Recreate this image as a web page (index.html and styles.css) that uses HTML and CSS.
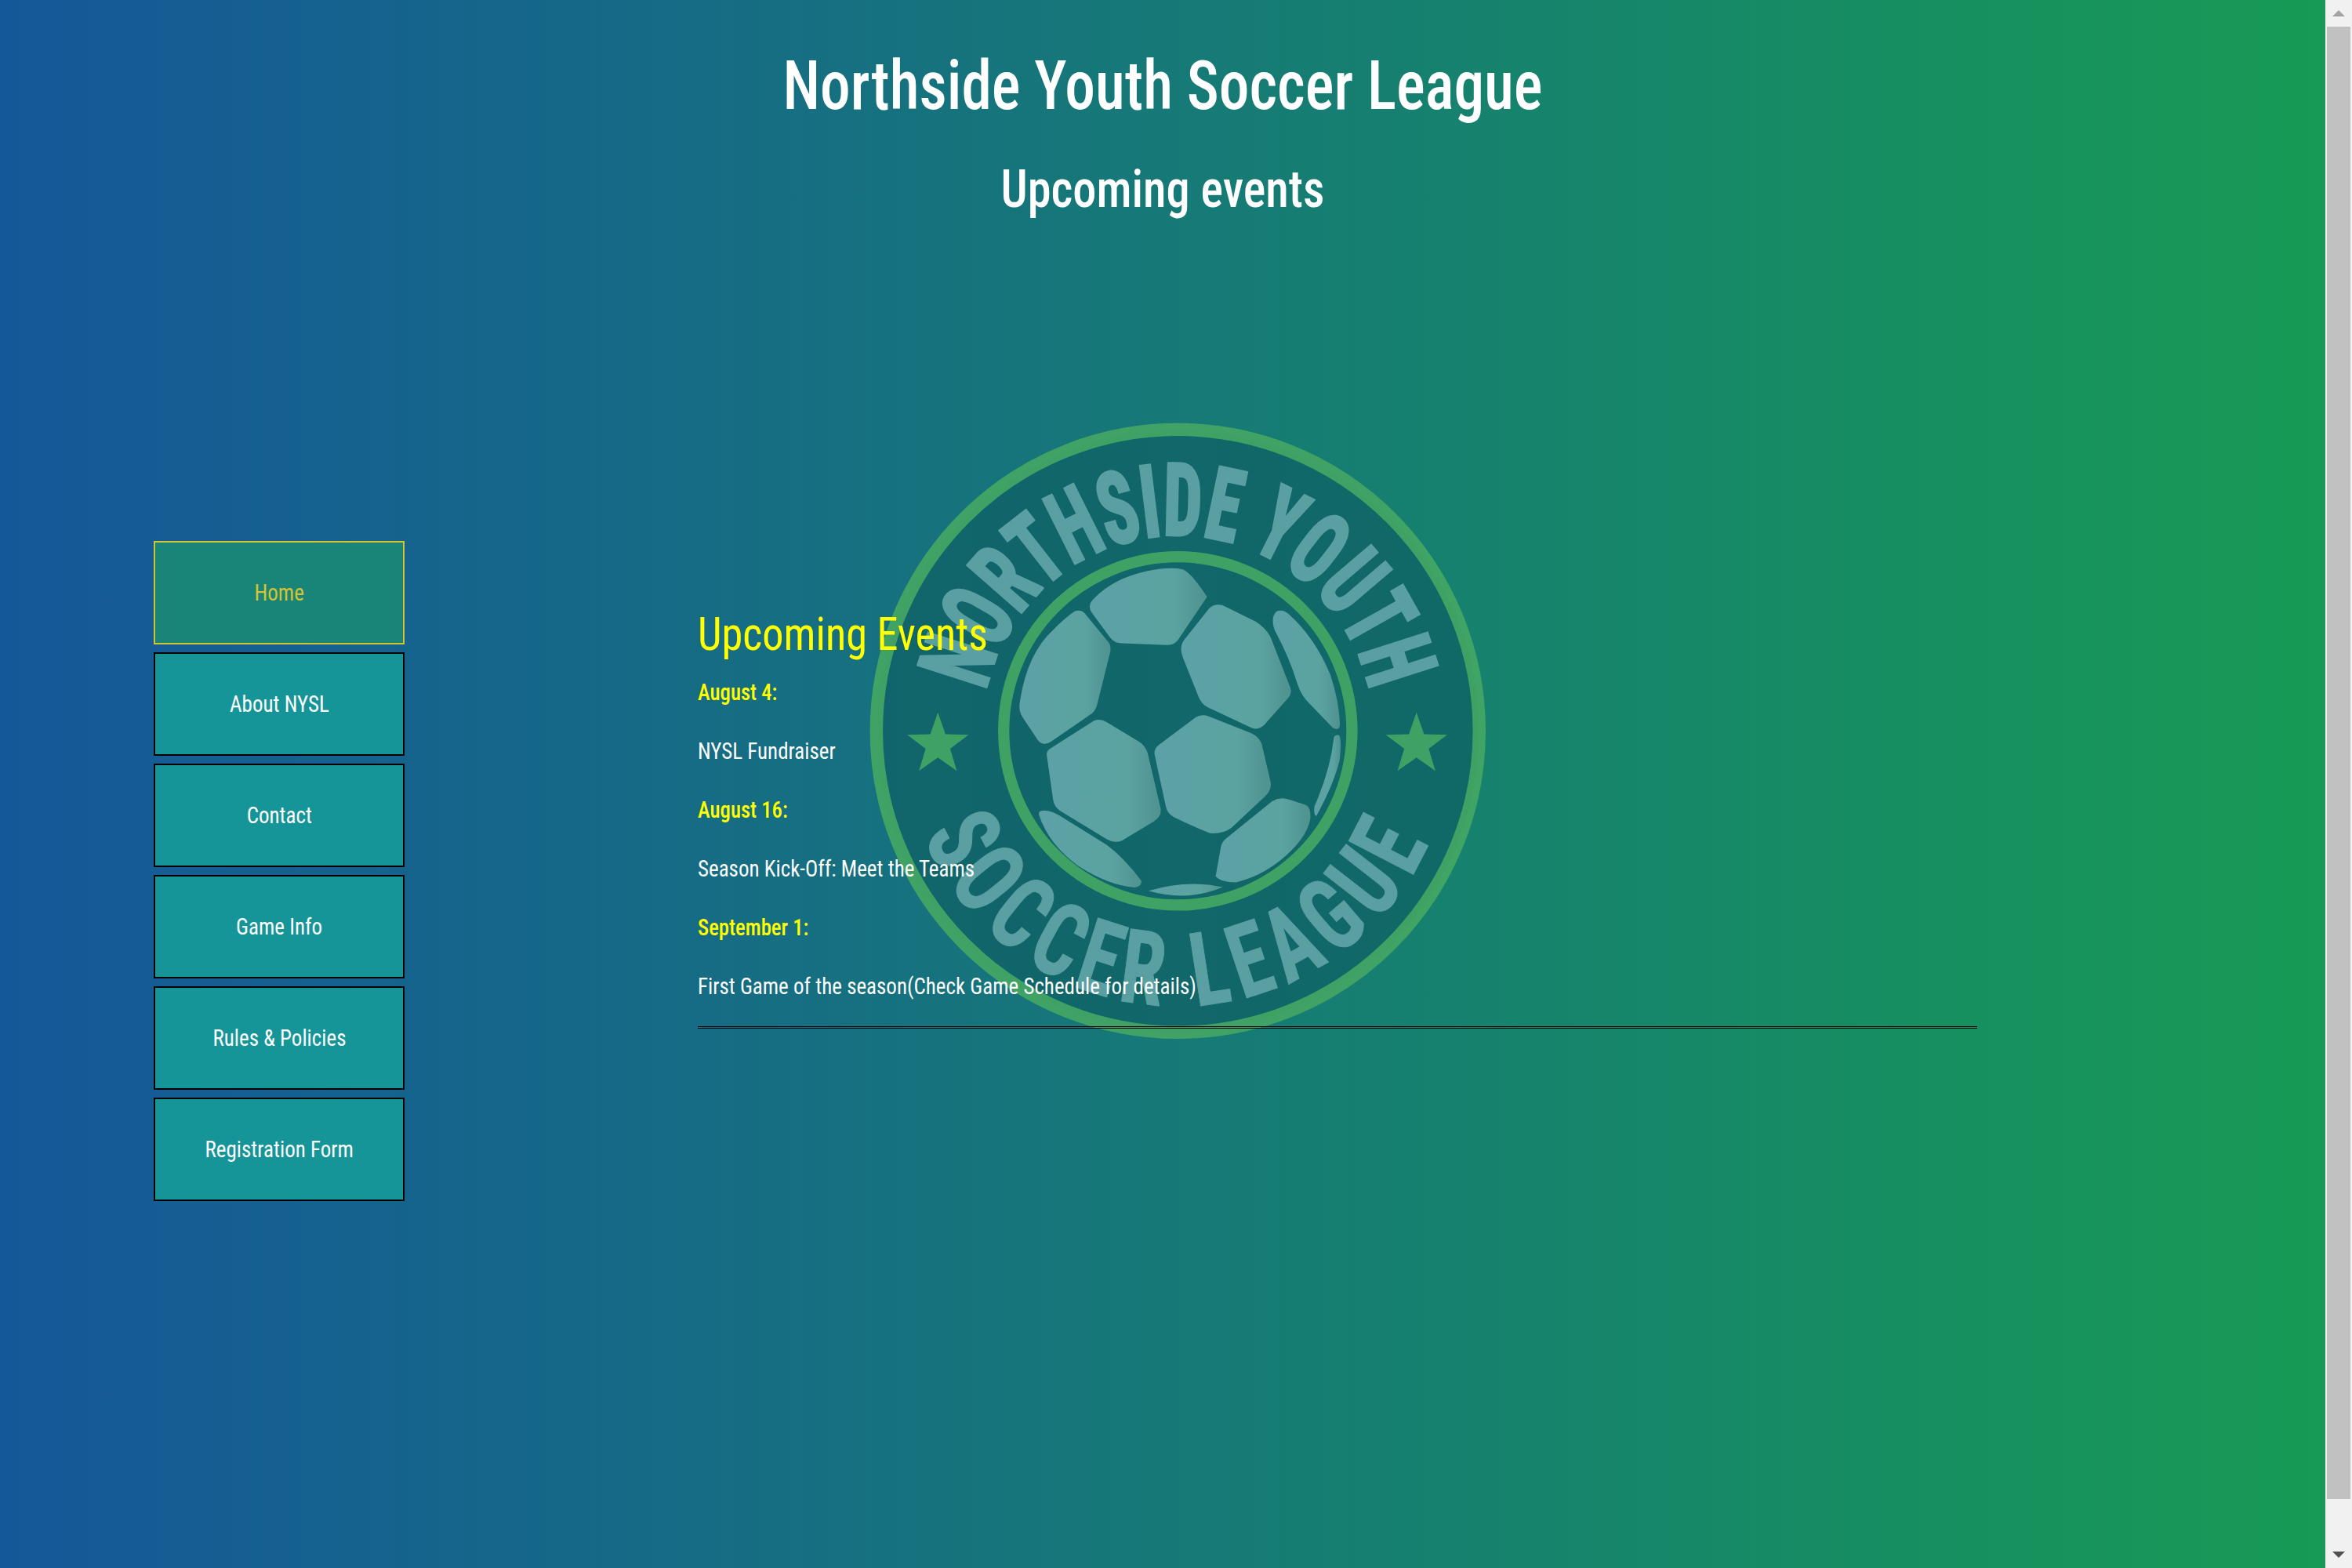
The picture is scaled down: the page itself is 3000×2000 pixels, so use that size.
FILE: index.html
```html
<!DOCTYPE html>
<html lang="en">
<head>
<meta charset="utf-8">
<title>Northside Youth Soccer League</title>
<link rel="stylesheet" href="styles.css">
</head>
<body>
<div class="app">
  <div class="page">
    <svg class="logo" viewBox="0 0 1568 1568" aria-hidden="true">
      <defs>
        <path id="arc-top" d="M770,1226 A456,456 0 0 1 770,314 A456,456 0 0 1 770,1226"/>
        <path id="arc-bottom" d="M770,130 A640,640 0 0 0 770,1410 A640,640 0 0 0 770,130"/>
        <polygon id="star" points="212,727 229.6,777.7 283.3,778.8 240.5,811.3 256,862.7 212,832 168,862.7 183.5,811.3 140.7,778.8 194.4,777.7"/>
        <linearGradient id="panel-fade" x1="0" y1="0" x2="1" y2="0">
          <stop offset="0" stop-color="#5ca1a6"/>
          <stop offset="0.7" stop-color="#5ba3a1"/>
          <stop offset="1" stop-color="#4f9290"/>
        </linearGradient>
      </defs>
      <circle class="logo-disc" cx="770" cy="770" r="700"/>
      <circle class="logo-ring" cx="770" cy="770" r="701" stroke-width="30"/>
      <circle class="logo-ring" cx="770" cy="770" r="405" stroke-width="26"/>
      <use href="#star" class="logo-star"/>
      <use href="#star" class="logo-star" x="1113"/>
      <g fill="url(#panel-fade)">
        <path d="M570,495 Q558,478 575,462 Q620,415 700,398 Q750,388 780,394 Q800,400 838,458 L772,556 Q764,570 745,570 L640,566 Q622,566 612,552 Z"/>
        <path d="M782,600 Q772,575 785,558 L843,485 Q855,472 875,478 L950,515 Q972,528 985,550 L1030,665 Q1038,682 1025,695 L972,755 Q958,770 940,762 L840,715 Q825,708 818,690 Z"/>
        <path d="M610,565 Q616,575 612,590 L582,710 Q578,725 565,733 L475,795 Q458,806 445,792 L410,740 Q398,722 403,700 Q420,590 480,535 Q510,505 530,492 Q545,486 555,498 Z"/>
        <path d="M575,746 Q590,740 605,750 L680,795 Q695,805 700,822 L730,950 Q733,968 715,980 L640,1025 Q622,1032 605,1022 L495,955 Q482,945 480,930 L465,825 Q465,815 475,810 Z"/>
        <path d="M812,738 Q825,730 842,736 L940,775 Q958,783 965,800 L985,885 Q990,905 975,920 L895,995 Q875,1010 845,1008 Q800,990 760,970 Q745,962 742,945 L716,825 Q714,812 725,803 Z"/>
        <path d="M1000,492 Q1015,485 1030,500 Q1090,555 1125,640 Q1145,700 1147,755 Q1145,772 1130,762 L1075,705 Q1058,690 1048,660 Q1030,600 995,535 Q985,505 1000,492 Z"/>
        <path d="M990,933 Q1010,922 1030,930 L1068,942 Q1080,948 1078,975 Q1070,1020 1010,1070 Q960,1110 905,1122 Q870,1122 858,1108 L870,1040 Q872,1028 885,1018 Z"/>
        <path d="M447,965 Q445,955 460,955 Q475,955 495,967 L605,1035 Q645,1065 685,1118 Q688,1130 670,1134 Q610,1130 540,1085 Q470,1035 447,965 Z"/>
        <path d="M702,1142 Q790,1115 875,1133 Q790,1168 702,1142 Z"/>
        <path d="M1133,785 Q1136,778 1145,780 Q1152,790 1146,840 Q1130,900 1092,968 Q1085,965 1088,945 Q1125,860 1133,785 Z"/>
      </g>
      <text class="logo-text"><textPath href="#arc-top" startOffset="50%" text-anchor="middle" textLength="1245" lengthAdjust="spacingAndGlyphs">NORTHSIDE YOUTH</textPath></text>
      <text class="logo-text logo-text-low"><textPath href="#arc-bottom" startOffset="50%" text-anchor="middle" textLength="1510" lengthAdjust="spacingAndGlyphs">SOCCER LEAGUE</textPath></text>
    </svg>
    <header class="site-header">
      <h1 class="site-title">Northside Youth Soccer League</h1>
      <h2 class="page-title">Upcoming events</h2>
    </header>
    <main class="layout">
      <nav class="menu">
        <a class="menu-item is-active" href="#"><span class="menu-label">Home</span></a>
        <a class="menu-item" href="#"><span class="menu-label">About NYSL</span></a>
        <a class="menu-item" href="#"><span class="menu-label">Contact</span></a>
        <a class="menu-item" href="#"><span class="menu-label">Game Info</span></a>
        <a class="menu-item" href="#"><span class="menu-label">Rules &amp; Policies</span></a>
        <a class="menu-item" href="#"><span class="menu-label">Registration Form</span></a>
      </nav>
      <section class="events">
        <h3 class="events-title">Upcoming Events</h3>
        <p class="event-date">August 4:</p>
        <p class="event-text">NYSL Fundraiser</p>
        <p class="event-date">August 16:</p>
        <p class="event-text">Season Kick-Off: Meet the Teams</p>
        <p class="event-date">September 1:</p>
        <p class="event-text">First Game of the season(Check Game Schedule for details)</p>
        <hr class="rule">
      </section>
    </main>
  </div>
  <aside class="scrollbar" aria-hidden="true">
    <div class="arrow-btn"><span class="arrow-up"></span></div>
    <div class="thumb-track"><div class="thumb"></div></div>
    <div class="arrow-btn"><span class="arrow-down"></span></div>
  </aside>
</div>
</body>
</html>
```
FILE: styles.css
```css
* { box-sizing: border-box; }
html, body { margin: 0; padding: 0; height: 2000px; overflow: hidden; }
body { font-family: "Roboto Condensed", Roboto, "Liberation Sans", sans-serif; font-stretch: condensed; color: #fff; }
.app { display: flex; height: 2000px; }
.page {
  flex: 1;
  position: relative;
  overflow: hidden;
  background: linear-gradient(90deg, #155899, #179a55);
}
.logo { position: absolute; left: 1080px; top: 510px; width: 860px; height: 860px; }
.logo-disc { fill: rgba(15, 95, 100, .72); }
.logo-ring { fill: none; stroke: rgba(66, 165, 100, .95); }
.logo-star { fill: rgba(66, 165, 100, .95); }
.logo-text {
  font-family: "Roboto Condensed", Roboto, sans-serif;
  font-weight: 700;
  font-size: 232px;
  fill: #5a9fa2;
  stroke: #5a9fa2;
  stroke-width: 8;
}
.logo-text-low { font-size: 238px; letter-spacing: 26px; stroke-width: 2; }
.site-header { position: relative; text-align: center; padding-top: 60px; }
.site-title { margin: 0; height: 98px; font-size: 88px; line-height: 98px; font-weight: 500; transform: scaleX(.88); }
.page-title { margin: 48px 0 0; height: 70px; font-size: 67px; line-height: 70px; font-weight: 500; transform: scaleX(.9); }
.layout { position: relative; display: flex; align-items: flex-start; margin-top: 414px; padding-left: 196px; }
.menu { display: flex; flex-direction: column; gap: 10px; width: 320px; }
.menu-item {
  display: flex;
  align-items: center;
  justify-content: center;
  height: 132px;
  padding-bottom: 2px;
  border: 2px solid #000;
  background: #169598;
  color: #fff;
  font-size: 30px;
  font-weight: 400;
  text-decoration: none;
}
.menu-label { transform: scaleX(.9); white-space: nowrap; }
.menu-item.is-active { background: #188578; border-color: #d4c434; color: #d4c434; }
.events { width: 1632px; margin-left: 374px; padding-top: 88px; }
.events-title { margin: 0 0 14px; font-size: 59px; line-height: 62px; font-weight: 400; color: #ffff00; transform: scaleX(.92); transform-origin: left center; }
.event-date, .event-text { margin: 0; height: 75px; font-size: 30px; line-height: 34px; padding-top: 12px; transform-origin: left center; }
.event-date { color: #ffff00; font-weight: 500; transform: scaleX(.89); }
.event-text { font-weight: 400; transform: scaleX(.9); }
.rule { margin: 5px 0 0; height: 3px; border: 0; border-top: 1px solid #000; border-bottom: 1px solid #000; }
.scrollbar { width: 34px; display: flex; flex-direction: column; background: #f1f1f1; }
.arrow-btn { height: 34px; display: flex; align-items: center; justify-content: center; }
.arrow-up { width: 0; height: 0; border-left: 8px solid transparent; border-right: 8px solid transparent; border-bottom: 8px solid #a3a3a3; }
.arrow-down { width: 0; height: 0; border-left: 8px solid transparent; border-right: 8px solid transparent; border-top: 8px solid #505050; }
.thumb-track { flex: 1; padding: 0 2px; }
.thumb { height: 1878px; background: #c1c1c1; }
```
